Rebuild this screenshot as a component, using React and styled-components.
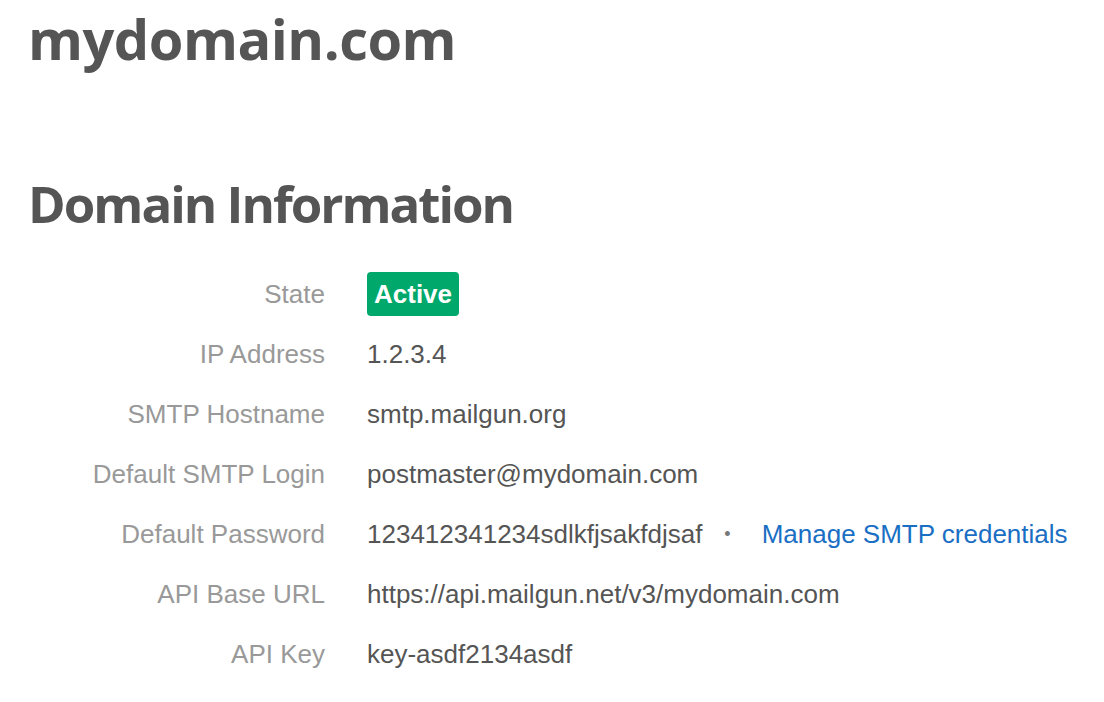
import React from 'react';
import styled, { createGlobalStyle } from 'styled-components';

const GlobalStyle = createGlobalStyle`
    body {
        margin: 0;
        background: #fff;
        font-family: "Liberation Sans", Arial, sans-serif;
    }
`;

const Page = styled.div`
    padding: 0 28px;
`;

const Title = styled.h1`
    margin: 0;
    font-family: "Open Sans", "Noto Sans", sans-serif;
    font-weight: 700;
    font-size: 56px;
    line-height: 76px;
    letter-spacing: -0.5px;
    color: #555;
`;

const SectionTitle = styled.h2`
    margin: 92px 0 26px;
    font-family: "Open Sans", "Noto Sans", sans-serif;
    font-weight: 700;
    font-size: 51px;
    line-height: 70px;
    letter-spacing: -2px;
    color: #555;
`;

const InfoList = styled.dl`
    margin: 0;
    display: grid;
    grid-template-columns: 297px 1fr;
    column-gap: 42px;
    font-size: 26px;
`;

const Label = styled.dt`
    text-align: right;
    color: #999;
    line-height: 60px;
    height: 60px;
`;

const Value = styled.dd`
    margin: 0;
    color: #555;
    line-height: 60px;
    height: 60px;
    display: flex;
    align-items: center;
`;

const Badge = styled.span`
    display: inline-block;
    background: #00a96b;
    color: #fff;
    font-weight: 700;
    border-radius: 4px;
    padding: 0 7px;
    line-height: 44px;
`;

const Dot = styled.span`
    margin: 0 31px 0 22px;
    color: #777;
    font-size: 18px;
`;

const Link = styled.a`
    color: #1a6fc4;
    text-decoration: none;
`;

const rows = [
    ['IP Address', '1.2.3.4'],
    ['SMTP Hostname', 'smtp.mailgun.org'],
    ['Default SMTP Login', 'postmaster@mydomain.com'],
];

const App = () => (
    <>
        <GlobalStyle />
        <Page>
            <Title>mydomain.com</Title>
            <SectionTitle>Domain Information</SectionTitle>
            <InfoList>
                <Label>State</Label>
                <Value><Badge>Active</Badge></Value>
                {rows.map(([k, v]) => (
                    <React.Fragment key={k}>
                        <Label>{k}</Label>
                        <Value>{v}</Value>
                    </React.Fragment>
                ))}
                <Label>Default Password</Label>
                <Value>
                    123412341234sdlkfjsakfdjsaf
                    <Dot>•</Dot>
                    <Link href="#">Manage SMTP credentials</Link>
                </Value>
                <Label>API Base URL</Label>
                <Value>https://api.mailgun.net/v3/mydomain.com</Value>
                <Label>API Key</Label>
                <Value>key-asdf2134asdf</Value>
            </InfoList>
        </Page>
    </>
);

export default App;
